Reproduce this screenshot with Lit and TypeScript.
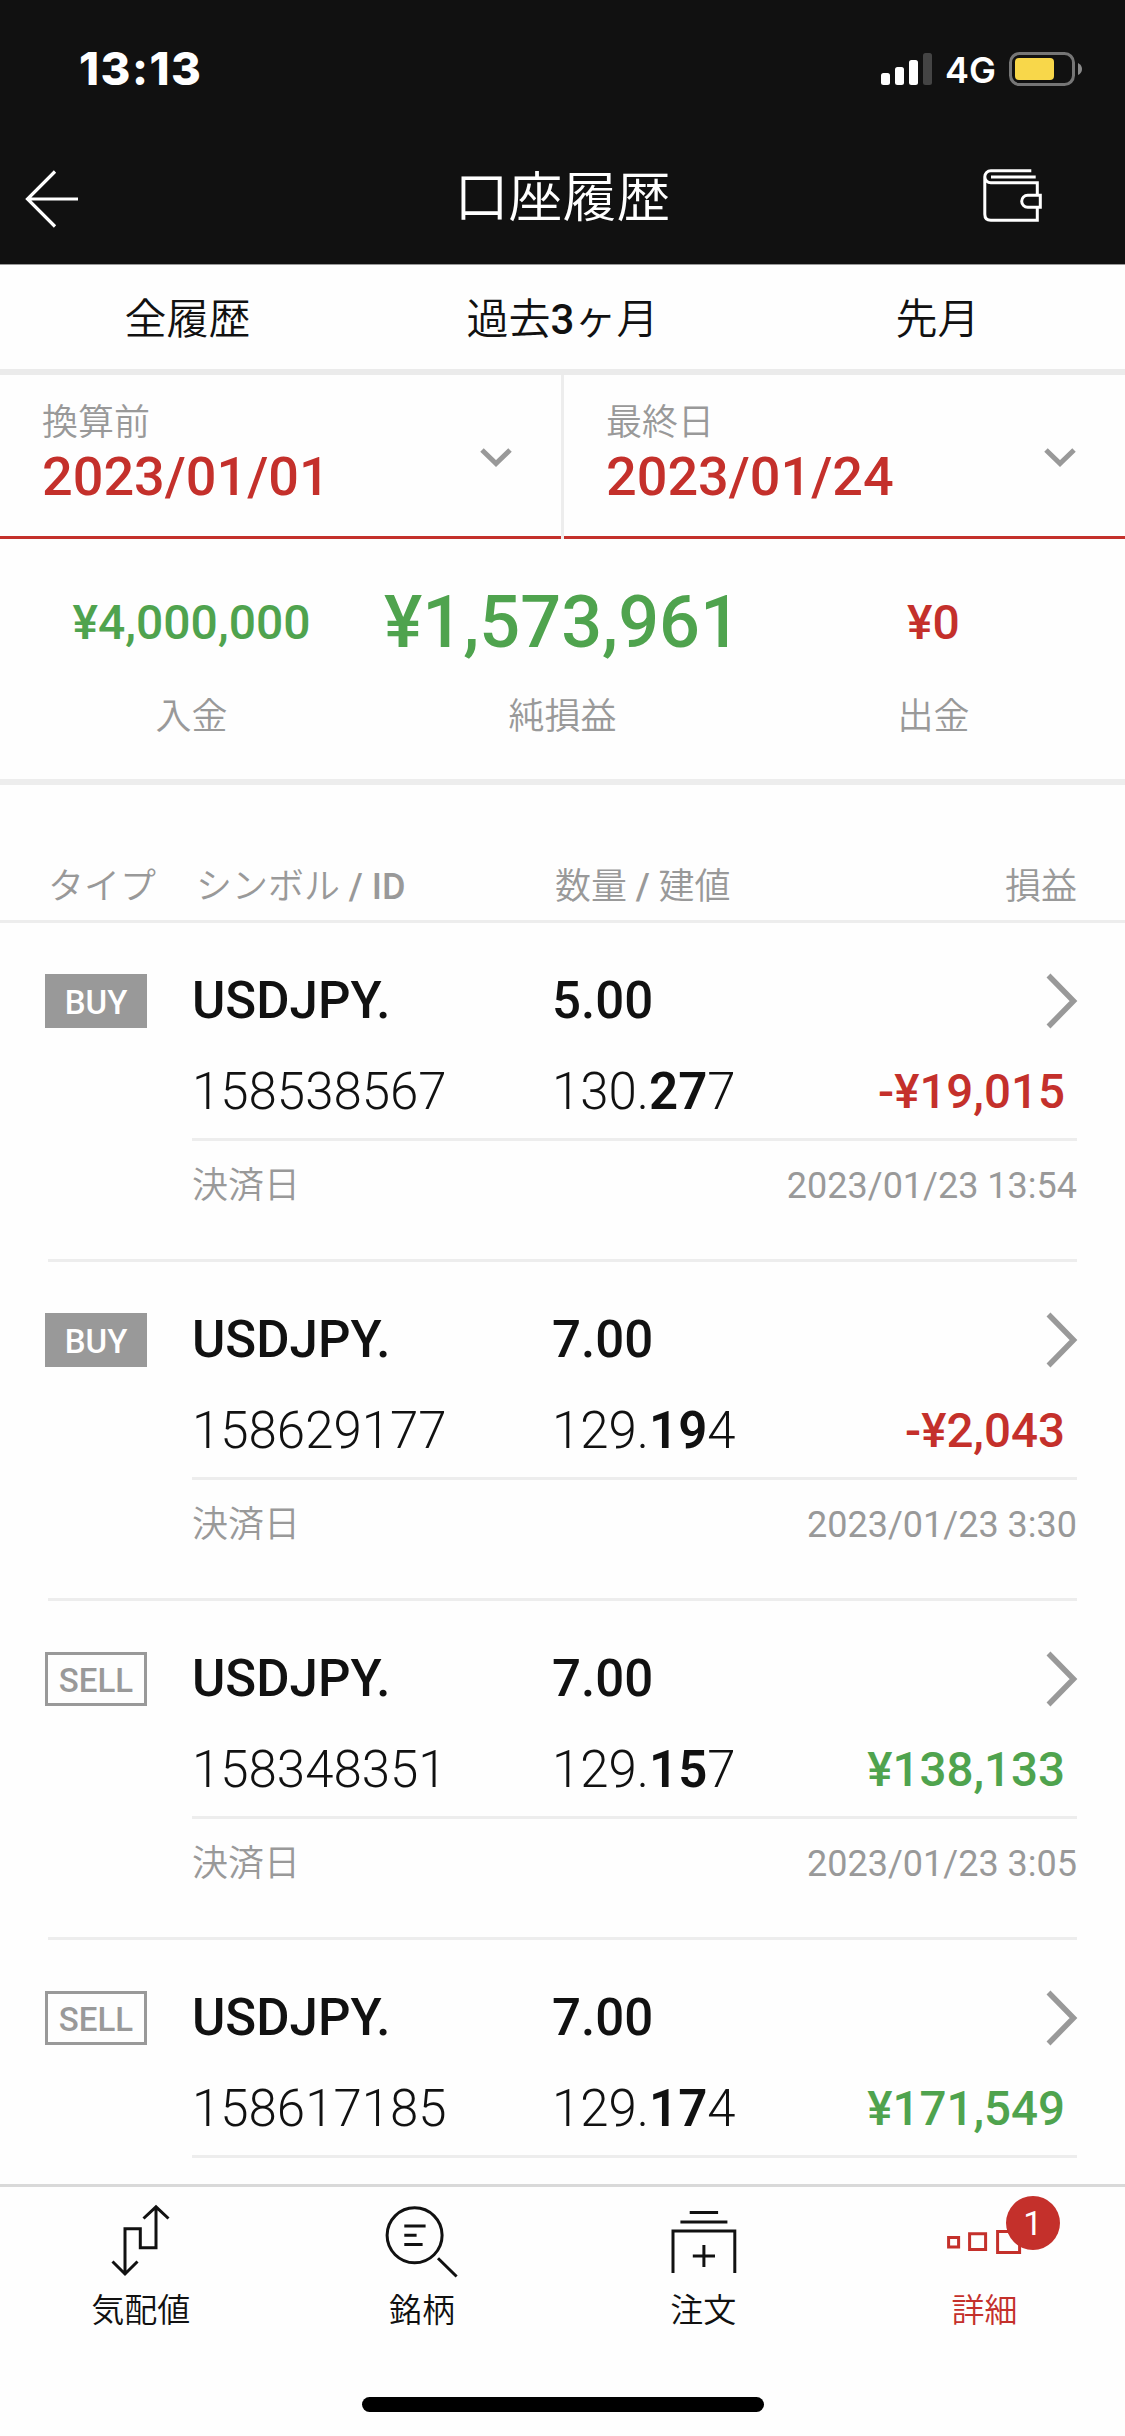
import { LitElement, html, css, svg, nothing } from "lit";
import { customElement, property } from "lit/decorators.js";

interface Trade {
  side: "BUY" | "SELL";
  symbol: string;
  id: string;
  volume: string;
  price: [string, string, string];
  profit: string;
  closed?: string;
}

const TRADES: Trade[] = [
  { side: "BUY", symbol: "USDJPY.", id: "158538567", volume: "5.00", price: ["130.", "27", "7"], profit: "-¥19,015", closed: "2023/01/23 13:54" },
  { side: "BUY", symbol: "USDJPY.", id: "158629177", volume: "7.00", price: ["129.", "19", "4"], profit: "-¥2,043", closed: "2023/01/23 3:30" },
  { side: "SELL", symbol: "USDJPY.", id: "158348351", volume: "7.00", price: ["129.", "15", "7"], profit: "¥138,133", closed: "2023/01/23 3:05" },
  { side: "SELL", symbol: "USDJPY.", id: "158617185", volume: "7.00", price: ["129.", "17", "4"], profit: "¥171,549" },
];

const shared = css`
  * { box-sizing: border-box; }
  :host {
    display: block;
    font-family: Roboto, "Noto Sans CJK JP", sans-serif;
    color: #111;
    white-space: nowrap;
  }
  svg { display: block; fill: none; }
`;

@customElement("app-top")
export class AppTop extends LitElement {
  static styles = [shared, css`
    :host { background: #111; color: #fff; height: 265px; border-bottom: 1px solid #999; }
    .status { display: flex; justify-content: space-between; align-items: flex-start; height: 138px; padding: 41px 43px 0 79px; font-family: Inter, sans-serif; }
    .time { font-size: 45.5px; line-height: 56px; font-weight: 800; letter-spacing: 1.5px; }
    .right { display: flex; align-items: flex-start; padding-top: 11px; }
    .net { font-size: 36px; line-height: 36px; font-weight: 600; margin: 0 13px 0 12px; }
    .bar { display: grid; grid-template-columns: 1fr 216px 1fr; align-items: center; height: 126px; }
    .title { font-size: 54px; line-height: 80px; font-weight: 350; margin-top: -5px; }
    .wallet { justify-self: end; margin-right: 80px; margin-top: -10px; }
    .back { margin-left: 22px; margin-top: -4px; }
  `];
  render() {
    return html`
      <div class="status">
        <div class="time">13:13</div>
        <div class="right">
          <svg width="52" height="34" viewBox="0 0 52 34">
            <rect x="0" y="21" width="9" height="12" rx="2.5" fill="#fff"/>
            <rect x="14" y="15" width="9" height="18" rx="2.5" fill="#fff"/>
            <rect x="28" y="8" width="9" height="25" rx="2.5" fill="#fff"/>
            <rect x="42" y="1" width="9" height="32" rx="2.5" fill="#444"/>
          </svg>
          <div class="net">4G</div>
          <svg width="73" height="34" viewBox="0 0 73 34">
            <rect x="1.5" y="1.5" width="63" height="31" rx="9" stroke="#767676" stroke-width="3"/>
            <rect x="6" y="6" width="39" height="22" rx="4" fill="#f8d74a"/>
            <path d="M69 11q4 2 4 6t-4 6z" fill="#8a8a8a"/>
          </svg>
        </div>
      </div>
      <div class="bar">
        <svg class="back" width="60" height="62" viewBox="0 0 60 62" stroke="#fff" stroke-width="3.2">
          <path d="M33 3.500 5.500 31 33 58.500M5.500 31H56"/>
        </svg>
        <div class="title">口座履歴</div>
        <svg class="wallet" width="62" height="56" viewBox="0 0 62 56" stroke="#fff" stroke-width="3">
          <path d="M48.300 2.700H7.800a6 6 0 0 0 0 12H54.300V27.300M1.800 8.700V46.300q0 6 6 6H54.300V39.300M8 9H52.700"/>
          <path d="M57.300 27.300H44.700a6 6 0 0 0 0 12H57.300z"/>
        </svg>
      </div>`;
  }
}

@customElement("date-field")
export class DateField extends LitElement {
  @property() label = "";
  @property() value = "";
  static styles = [shared, css`
    :host { display: flex; justify-content: space-between; height: 164px; border-bottom: 3px solid #c4302b; padding: 22px 48px 0 42px; }
    .label { font-size: 36px; line-height: 52px; font-weight: 350; color: #999; }
    .value { font-size: 54px; line-height: 56px; font-weight: 500; color: #c4302b; }
    .chev { margin-top: 49px; }
  `];
  render() {
    return html`
      <div>
        <div class="label">${this.label}</div>
        <div class="value">${this.value}</div>
      </div>
      <svg class="chev" width="34" height="24" viewBox="0 0 34 24"><path d="M3 4l14 13.500L31 4" stroke="#999" stroke-width="5"/></svg>`;
  }
}

@customElement("trade-row")
export class TradeRow extends LitElement {
  @property({ attribute: false }) trade!: Trade;
  static styles = [shared, css`
    :host { height: 339px; flex: none; padding-right: 48px; display: flex; flex-direction: column; }
    .main { flex: 1; display: grid; grid-template-columns: 147px 1fr; column-gap: 45px; }
    .badge { margin: 51px 0 0 45px; width: 102px; height: 54px; border: 3px solid #999; display: grid; place-items: center; padding-top: 3px; font-size: 33px; line-height: 42px; font-weight: 500; color: #999; }
    .badge.buy { background: #999; color: #fff; }
    .body { padding-top: 48px; }
    .line { display: grid; grid-template-columns: 360px 1fr auto; font-size: 51px; line-height: 60px; }
    .bold { font-weight: 500; height: 60px; }
    .light { font-weight: 300; margin-top: 31px; height: 76px; }
    .light b { font-weight: 600; }
    .profit { font-size: 47.5px; font-weight: 500; color: #4fa34e; padding-right: 12px; }
    .profit.neg { color: #c4302b; }
    .next { margin-top: -1px; margin-right: -1px; }
    .closed { border-top: 3px solid #ededed; display: flex; justify-content: space-between; padding-top: 19px; font-size: 36px; line-height: 52px; color: #999; }
    .jp { font-weight: 350; }
    .sep { height: 3px; margin-left: 48px; background: #ededed; }
  `];
  render() {
    const t = this.trade;
    return html`
      <div class="main">
        <div><div class="badge ${t.side === "BUY" ? "buy" : ""}">${t.side}</div></div>
        <div class="body">
          <div class="line bold">
            <span>${t.symbol}</span><span>${t.volume}</span>
            <svg class="next" width="34" height="62" viewBox="0 0 34 62"><path d="M4.500 5.500 29.500 31 4.500 56.500" stroke="#999" stroke-width="5.500"/></svg>
          </div>
          <div class="line light">
            <span>${t.id}</span>
            <span>${t.price[0]}<b>${t.price[1]}</b>${t.price[2]}</span>
            <span class="profit ${t.profit.startsWith("-") ? "neg" : ""}">${t.profit}</span>
          </div>
          <div class="closed">${t.closed ? html`<span class="jp">決済日</span><span>${t.closed}</span>` : nothing}</div>
        </div>
      </div>
      <div class="sep"></div>`;
  }
}

@customElement("tab-item")
export class TabItem extends LitElement {
  @property() icon = "";
  @property() label = "";
  @property() badge = "";
  static styles = [shared, css`
    :host { display: flex; flex-direction: column; align-items: center; position: relative; padding-top: 16px; }
    :host([active]) { color: #c4302b; }
    .label { font-size: 33px; line-height: 48px; font-weight: 350; margin-top: 4px; }
    .badge { position: absolute; left: 162px; top: 9px; width: 54px; height: 54px; border-radius: 50%; background: #c4302b; color: #fff; font-size: 34px; line-height: 54px; text-align: center; }
  `];
  private glyph() {
    switch (this.icon) {
      case "quotes":
        return svg`<path d="M27 71V25.700H42.300V44.700H58V4M14.500 58.500 27 71 39.500 58.500M45.500 15.500 58 3.800 70.500 15.500"/>`;
      case "symbols":
        return svg`<circle cx="35.6" cy="32.3" r="27.5"/><path d="M25.300 23H46.600M25.300 32.300H37.600M25.300 41.500H43.600M59 55.300 77.600 73.500"/>`;
      case "orders":
        return svg`<path d="M28.700 9.500H57.100M19.400 19H66.400M12 70V28H73.800V70M42.900 42V64M31.800 53H54"/>`;
      default:
        return svg`<path d="M6.600 34.500h10v9.500h-10zM27.600 30.800h16v15.700h-16zM55.600 28.500h22v21h-22z"/>`;
    }
  }
  render() {
    return html`
      <svg width="85" height="80" viewBox="0 0 85 80" stroke="currentColor" stroke-width="3">${this.glyph()}</svg>
      <div class="label">${this.label}</div>
      ${this.badge ? html`<div class="badge">${this.badge}</div>` : nothing}`;
  }
}

@customElement("app-root")
export class AppRoot extends LitElement {
  static styles = [shared, css`
    :host { width: 1125px; height: 2436px; background: #fefefe; display: flex; flex-direction: column; overflow: hidden; }
    .ranges { display: grid; grid-template-columns: repeat(3, 1fr); height: 110px; border-bottom: 6px solid #ebebeb; text-align: center; font-size: 42px; line-height: 99px; font-weight: 350; padding-top: 5px; }
    .ranges b { font-weight: 500; }
    .dates { display: grid; grid-template-columns: 561px 561px; column-gap: 3px; background: linear-gradient(90deg, transparent 561px, #ededed 561px, #ededed 564px, transparent 564px); }
    .summary { display: grid; grid-template-columns: repeat(3, 371px); justify-content: center; height: 246px; border-bottom: 6px solid #ededed; text-align: center; padding-top: 39px; }
    .amount { height: 90px; line-height: 90px; font-size: 48px; font-weight: 500; color: #4fa34e; }
    .amount.big { font-size: 72px; }
    .amount.red { color: #c4302b; }
    .caption { font-size: 36px; line-height: 52px; font-weight: 350; color: #999; margin-top: 23px; }
    .head { display: grid; grid-template-columns: 148px 359px 1fr auto; height: 138px; border-bottom: 3px solid #ededed; padding: 76px 48px 0 48px; font-size: 36px; line-height: 52px; font-weight: 350; color: #999; }
    .head b { font-weight: 500; }
    .list { flex: 1; min-height: 0; overflow: hidden; display: flex; flex-direction: column; }
    .tabs { flex: none; height: 252px; border-top: 3px solid #d9d9d9; display: flex; flex-direction: column; align-items: center; justify-content: space-between; padding-bottom: 24px; }
    .items { display: grid; grid-template-columns: repeat(4, 281.25px); }
    .home { width: 402px; height: 15px; border-radius: 8px; background: #000; }
  `];
  render() {
    return html`
      <app-top></app-top>
      <div class="ranges"><span>全履歴</span><span>過去<b>3</b>ヶ月</span><span>先月</span></div>
      <div class="dates">
        <date-field label="換算前" value="2023/01/01"></date-field>
        <date-field label="最終日" value="2023/01/24"></date-field>
      </div>
      <div class="summary">
        <div><div class="amount">¥4,000,000</div><div class="caption">入金</div></div>
        <div><div class="amount big">¥1,573,961</div><div class="caption">純損益</div></div>
        <div><div class="amount red">¥0</div><div class="caption">出金</div></div>
      </div>
      <div class="head"><span>タイプ</span><span>シンボル <b>/ ID</b></span><span>数量 <b>/</b> 建値</span><span>損益</span></div>
      <div class="list">${TRADES.map((t) => html`<trade-row .trade=${t}></trade-row>`)}</div>
      <div class="tabs">
        <div class="items">
          <tab-item icon="quotes" label="気配値"></tab-item>
          <tab-item icon="symbols" label="銘柄"></tab-item>
          <tab-item icon="orders" label="注文"></tab-item>
          <tab-item icon="more" label="詳細" badge="1" active></tab-item>
        </div>
        <div class="home"></div>
      </div>`;
  }
}
